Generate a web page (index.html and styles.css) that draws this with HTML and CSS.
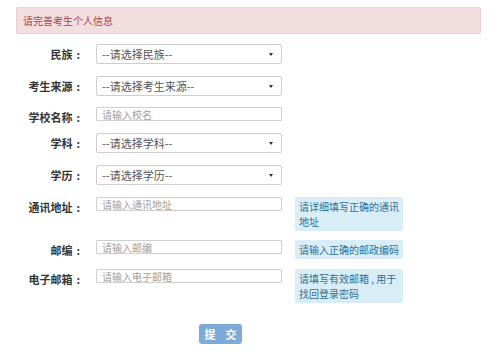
FILE: index.html
```html
<!DOCTYPE html>
<html lang="zh">
<head>
<meta charset="utf-8">
<title>完善信息</title>
<link rel="stylesheet" href="styles.css">
</head>
<body>
<div class="page">
  <div class="alert">请完善考生个人信息</div>
  <form class="form">
    <div class="row">
      <label class="label">民族<span class="colon">:</span></label>
      <div class="select">--请选择民族--</div>
    </div>
    <div class="row row-tight1">
      <label class="label">考生来源<span class="colon">:</span></label>
      <div class="select">--请选择考生来源--</div>
    </div>
    <div class="row row-tight2">
      <label class="label">学校名称<span class="colon">:</span></label>
      <input class="input" type="text" placeholder="请输入校名">
    </div>
    <div class="row">
      <label class="label">学科<span class="colon">:</span></label>
      <div class="select">--请选择学科--</div>
    </div>
    <div class="row">
      <label class="label">学历<span class="colon">:</span></label>
      <div class="select">--请选择学历--</div>
    </div>
    <div class="row row-help">
      <label class="label">通讯地址<span class="colon">:</span></label>
      <input class="input" type="text" placeholder="请输入通讯地址">
      <div class="help">请详细填写正确的通讯地址</div>
    </div>
    <div class="row row-help">
      <label class="label">邮编<span class="colon">:</span></label>
      <input class="input" type="text" placeholder="请输入邮编">
      <div class="help">请输入正确的邮政编码</div>
    </div>
    <div class="row row-last">
      <label class="label">电子邮箱<span class="colon">:</span></label>
      <input class="input" type="text" placeholder="请输入电子邮箱">
      <div class="help">请填写有效邮箱&nbsp;,&nbsp;用于找回登录密码</div>
    </div>
    <div class="actions">
      <button class="btn" type="button">提<span class="gap"></span>交</button>
    </div>
  </form>
</div>
</body>
</html>
```
FILE: styles.css
```css
html, body {
  margin: 0;
  padding: 0;
  background: #ffffff;
}
body {
  font-family: "Noto Sans CJK SC", "Noto Sans", sans-serif;
  color: #333;
}
.page {
  width: 500px;
  height: 356px;
  padding: 7px 0 0 16px;
  box-sizing: border-box;
}
.alert {
  width: 465px;
  height: 27px;
  box-sizing: border-box;
  background: #f2dede;
  border: 1px solid #ebd0d5;
  border-radius: 2px;
  color: #a94442;
  font-size: 10px;
  line-height: 25px;
  padding-left: 6px;
  margin-bottom: 10px;
}
.form {
  margin-left: -16px;
  display: flex;
  flex-direction: column;
}
.row {
  display: flex;
  align-items: flex-start;
  margin-bottom: 12px;
}
.row-tight1 { margin-bottom: 11px; }
.row-tight2 { margin-bottom: 6px; }
.row-help { margin-bottom: 9px; }
.row-last { margin-bottom: 17px; }
.label {
  width: 86px;
  text-align: right;
  font-size: 11px;
  font-weight: bold;
  line-height: 20px;
  height: 20px;
  margin-right: 10px;
  color: #333;
  white-space: nowrap;
}
.colon {
  padding-left: 4px;
  padding-right: 6px;
}
.select {
  position: relative;
  width: 186px;
  height: 20px;
  box-sizing: border-box;
  border: 1px solid #cfcfcf;
  border-radius: 2px;
  font-size: 11px;
  line-height: 18px;
  padding-left: 5px;
  color: #555;
  background: #fff;
}
.select::after {
  content: "";
  position: absolute;
  right: 8px;
  top: 8px;
  border-left: 2.5px solid transparent;
  border-right: 2.5px solid transparent;
  border-top: 3px solid #333;
}
.input {
  width: 186px;
  height: 14px;
  box-sizing: border-box;
  border: 1px solid #cfcfcf;
  border-radius: 1px;
  padding: 0 5px;
  margin: 0;
  font-family: "Noto Sans CJK SC", "Noto Sans", sans-serif;
  font-size: 10px;
  line-height: 12px;
  color: #555;
  outline: none;
}
.input::placeholder {
  color: #a0a0a0;
}
.help {
  margin-left: 13px;
  width: 108px;
  box-sizing: border-box;
  padding: 2px 4px;
  background: #d9edf7;
  border-radius: 2px;
  color: #31708f;
  font-size: 10px;
  line-height: 15px;
}
.actions {
  padding-left: 199px;
}
.btn {
  width: 43px;
  height: 20px;
  border: none;
  border-radius: 3px;
  background: #7eaad8;
  color: #fff;
  font-family: "Noto Sans CJK SC", "Noto Sans", sans-serif;
  font-size: 11px;
  font-weight: bold;
  padding: 0;
  line-height: 20px;
}
.gap {
  display: inline-block;
  width: 10px;
}
```
